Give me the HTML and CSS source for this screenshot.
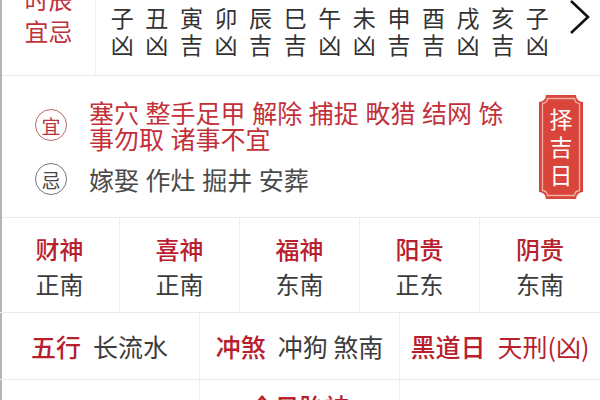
FILE: index.html
```html
<!DOCTYPE html>
<html lang="zh">
<head>
<meta charset="utf-8">
<link rel="stylesheet" href="styles.css">
</head>
<body>
<div class="page">
  <section class="hours">
    <div class="hours-label">
      <div>时辰</div>
      <div>宜忌</div>
    </div>
    <div class="hours-grid">
      <div class="hour"><span>子</span><span>凶</span></div>
      <div class="hour"><span>丑</span><span>凶</span></div>
      <div class="hour"><span>寅</span><span>吉</span></div>
      <div class="hour"><span>卯</span><span>凶</span></div>
      <div class="hour"><span>辰</span><span>吉</span></div>
      <div class="hour"><span>巳</span><span>吉</span></div>
      <div class="hour"><span>午</span><span>凶</span></div>
      <div class="hour"><span>未</span><span>凶</span></div>
      <div class="hour"><span>申</span><span>吉</span></div>
      <div class="hour"><span>酉</span><span>吉</span></div>
      <div class="hour"><span>戌</span><span>凶</span></div>
      <div class="hour"><span>亥</span><span>吉</span></div>
      <div class="hour"><span>子</span><span>凶</span></div>
    </div>
    <div class="hours-more">
      <svg width="24" height="36" viewBox="0 0 24 36"><polyline points="4,1 21,17 4,33" fill="none" stroke="#111" stroke-width="2.6" stroke-linejoin="miter"/></svg>
    </div>
  </section>

  <section class="yiji">
    <div class="yiji-list">
      <div class="yiji-row">
        <span class="badge-circle yi">宜</span>
        <p class="yiji-text yi-text">塞穴 整手足甲 解除 捕捉 畋猎 结网 馀<br>事勿取 诸事不宜</p>
      </div>
      <div class="yiji-row ji-row">
        <span class="badge-circle ji">忌</span>
        <p class="yiji-text ji-text">嫁娶 作灶 掘井 安葬</p>
      </div>
    </div>
    <div class="zeji">
      <svg class="zeji-bg" width="44" height="104" viewBox="0 0 44 104">
        <path d="M7,0 H37 A7,7 0 0 0 44,7 V97 A7,7 0 0 0 37,104 H7 A7,7 0 0 0 0,97 V7 A7,7 0 0 0 7,0 Z" fill="#d9443b"/>
        <path d="M8.5,3.5 H35.5 A5.5,5.5 0 0 0 40.5,8.5 V95.5 A5.5,5.5 0 0 0 35.5,100.5 H8.5 A5.5,5.5 0 0 0 3.5,95.5 V8.5 A5.5,5.5 0 0 0 8.5,3.5 Z" fill="none" stroke="#f3b0a4" stroke-width="1.3"/>
      </svg>
      <span class="zeji-text">择吉日</span>
    </div>
  </section>

  <section class="gods">
    <div class="god"><div class="god-title">财神</div><div class="god-val">正南</div></div>
    <div class="god"><div class="god-title">喜神</div><div class="god-val">正南</div></div>
    <div class="god"><div class="god-title">福神</div><div class="god-val">东南</div></div>
    <div class="god"><div class="god-title">阳贵</div><div class="god-val">正东</div></div>
    <div class="god"><div class="god-title">阴贵</div><div class="god-val">东南</div></div>
  </section>

  <section class="info">
    <div class="info-cell"><span class="info-label">五行</span><span class="info-val">长流水</span></div>
    <div class="info-cell"><span class="info-label">冲煞</span><span class="info-val">冲狗 煞南</span></div>
    <div class="info-cell"><span class="info-label">黑道日</span><span class="info-val red">天刑(凶)</span></div>
  </section>

  <section class="info info-bottom">
    <div class="info-cell"></div>
    <div class="info-cell"><span class="info-label">今日胎神</span></div>
    <div class="info-cell"></div>
  </section>
</div>
</body>
</html>
```

FILE: styles.css
```css
* { box-sizing: border-box; margin: 0; padding: 0; }
html, body {
  width: 600px;
  height: 400px;
  overflow: hidden;
  background: #fff;
}
body {
  font-family: "Noto Sans CJK SC", "Noto Sans", sans-serif;
  color: #333;
}
.page {
  width: 600px;
  border-left: 2px solid #b4b4b4;
  min-height: 400px;
}

/* hours */
.hours {
  display: flex;
  height: 76px;
  border-bottom: 1px solid #ebebeb;
}
.hours-label {
  width: 94px;
  border-right: 1px solid #efefef;
  display: flex;
  flex-direction: column;
  justify-content: flex-end;
  align-items: center;
  padding-bottom: 28px;
  color: #c2303c;
  font-size: 24px;
  line-height: 32px;
}
.hours-grid {
  display: grid;
  grid-template-columns: repeat(13, 34.58px);
  margin-left: 9px;
  padding-top: 4px;
}
.hour {
  display: flex;
  flex-direction: column;
  align-items: center;
  font-size: 23px;
  line-height: 27px;
  color: #333;
}
.hours-more {
  padding-left: 12px;
}
.hours-more svg { display: block; }

/* yi ji */
.yiji {
  display: flex;
  align-items: center;
  height: 142px;
  border-bottom: 1px solid #ebebeb;
}
.yiji-list {
  flex: 1;
  padding-left: 33px;
  padding-top: 1px;
}
.yiji-row {
  display: flex;
  align-items: center;
}
.ji-row {
  margin-top: 12px;
}
.badge-circle {
  width: 32px;
  height: 32px;
  border-radius: 50%;
  display: flex;
  align-items: center;
  justify-content: center;
  font-size: 19px;
  line-height: 1;
  flex: none;
}
.badge-circle.yi {
  border: 1.3px solid #b86a6a;
  color: #b8333c;
}
.badge-circle.ji {
  border: 1.3px solid #777;
  color: #444;
}
.yiji-text {
  margin-left: 22px;
  font-size: 25px;
  line-height: 26px;
  word-spacing: 1px;
}
.yi-text {
  color: #c3303a;
}
.ji-text {
  color: #4a4a4a;
}
.zeji {
  position: relative;
  width: 44px;
  height: 104px;
  margin-right: 17px;
  margin-top: 1px;
  display: flex;
  justify-content: center;
  align-items: center;
}
.zeji-bg {
  position: absolute;
  left: 0;
  top: 0;
}
.zeji-text {
  position: relative;
  writing-mode: vertical-rl;
  color: #fff;
  font-size: 23px;
  line-height: 24px;
  letter-spacing: 5px;
  padding-top: 5px;
}

/* gods */
.gods {
  display: grid;
  grid-template-columns: repeat(5, 1fr);
  height: 95px;
  border-bottom: 1px solid #ebebeb;
  margin-left: -2px;
}
.god {
  display: flex;
  flex-direction: column;
  align-items: center;
  padding-top: 13px;
  border-right: 1px solid #efefef;
  line-height: 35px;
}
.god:last-child { border-right: none; }
.god-title {
  color: #b8202e;
  font-size: 24px;
  font-weight: 500;
}
.god-val {
  color: #3c3c3c;
  font-size: 24px;
}

/* info */
.info {
  display: grid;
  grid-template-columns: 200px 200px 200px;
  height: 67px;
  border-bottom: 1px solid #ebebeb;
  margin-left: -2px;
}
.info-cell {
  display: flex;
  align-items: center;
  justify-content: center;
  gap: 12px;
  border-right: 1px solid #efefef;
  font-size: 25px;
}
.info-cell:last-child { border-right: none; }
.info-label {
  color: #b8202e;
  font-weight: 500;
}
.info-val {
  color: #3c3c3c;
}
.info-val.red {
  color: #b8202e;
}
.info-bottom {
  border-bottom: none;
}
.info-bottom .info-cell {
  align-items: flex-start;
  padding-top: 8px;
}
```
